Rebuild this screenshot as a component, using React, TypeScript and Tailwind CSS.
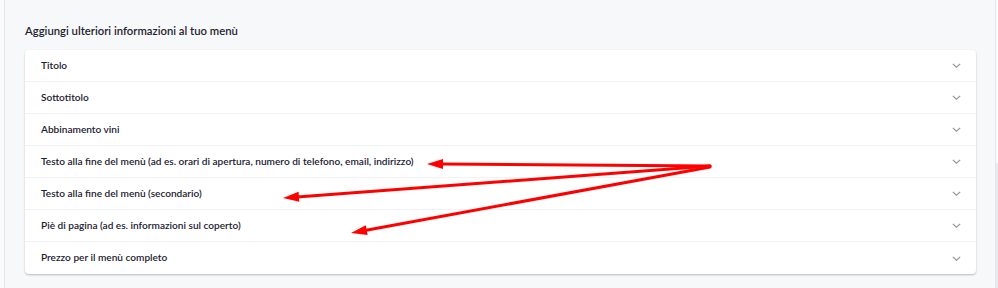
import React from "react";

const rows = [
  "Titolo",
  "Sottotitolo",
  "Abbinamento vini",
  "Testo alla fine del menù (ad es. orari di apertura, numero di telefono, email, indirizzo)",
  "Testo alla fine del menù (secondario)",
  "Piè di pagina (ad es. informazioni sul coperto)",
  "Prezzo per il menù completo",
];

function Chevron() {
  return (
    <svg width="9" height="5" viewBox="0 0 9 5" className="shrink-0">
      <path d="M0.8 0.8 L4.5 4.2 L8.2 0.8" fill="none" stroke="#8d929b" strokeWidth="1.1" />
    </svg>
  );
}

function Arrow({ x1, y1, x2, y2 }: { x1: number; y1: number; x2: number; y2: number }) {
  const dx = x2 - x1;
  const dy = y2 - y1;
  const len = Math.sqrt(dx * dx + dy * dy);
  const ux = dx / len;
  const uy = dy / len;
  const hl = 16;
  const hw = 5;
  const bx = x2 - ux * hl;
  const by = y2 - uy * hl;
  const px = -uy;
  const py = ux;
  return (
    <g>
      <line x1={x1} y1={y1} x2={bx + ux * 2} y2={by + uy * 2} stroke="#ff0000" strokeWidth="3" strokeLinecap="round" />
      <polygon
        points={`${x2},${y2} ${bx + px * hw},${by + py * hw} ${bx - px * hw},${by - py * hw}`}
        fill="#ff0000"
      />
    </g>
  );
}

export default function App() {
  return (
    <div
      className="relative w-[998px] h-[288px] bg-[#f7f8fa] overflow-hidden flex"
      style={{ fontFamily: "Lato, 'Noto Sans', sans-serif" }}
    >
      <div className="w-[4px] shrink-0 bg-[#fafbfc]" />
      <div className="w-px shrink-0 bg-[#e6e7ea]" />
      <div className="flex-1 pl-[20px] pr-[19px] pt-[24px]">
        <div className="text-[11.3px] font-semibold text-[#1f2430] leading-[14px] h-[14px]">
          Aggiungi ulteriori informazioni al tuo menù
        </div>
        <div className="mt-[12px] bg-white rounded-[4px] shadow-[0_1px_2px_rgba(0,0,0,0.25)]">
          {rows.map((r, i) => (
            <div
              key={i}
              className={`flex items-center justify-between h-[32px] pl-[16px] pr-[15px] ${
                i < rows.length - 1 ? "border-b border-[#f1f2f4]" : ""
              }`}
            >
              <span className="text-[10.1px] font-semibold text-[#1c2230]">{r}</span>
              <Chevron />
            </div>
          ))}
        </div>
      </div>
      <div className="w-px shrink-0 bg-[#e6e7ea]" />
      <div className="w-[2px] shrink-0 flex flex-col">
        <div className="h-[163px] bg-[#fafbfc]" />
        <div className="flex-1 bg-[#e9eaed]" />
      </div>
      <svg className="absolute left-0 top-0 pointer-events-none" width="998" height="288">
        <Arrow x1={710} y1={166} x2={427} y2={164} />
        <Arrow x1={710} y1={166} x2={283} y2={198} />
        <Arrow x1={710} y1={167} x2={351} y2={233} />
      </svg>
    </div>
  );
}
